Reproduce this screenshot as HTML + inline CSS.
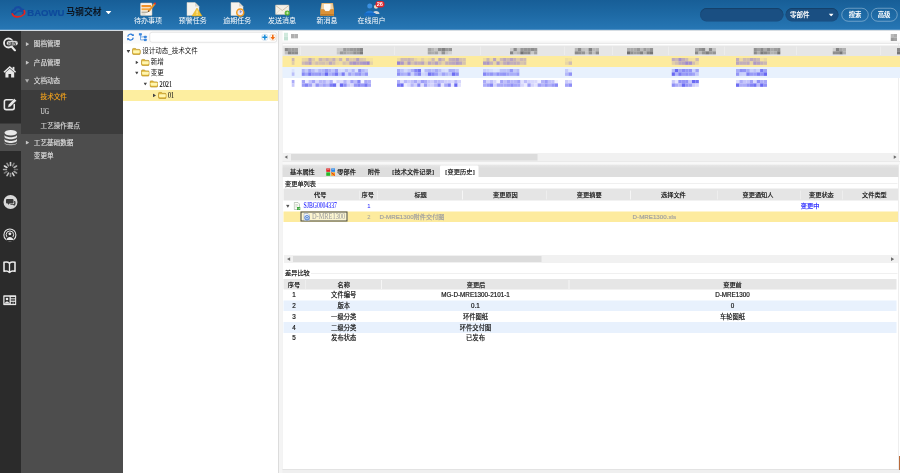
<!DOCTYPE html>
<html lang="zh-CN"><head><meta charset="utf-8"><title>马钢交材</title>
<style>
html,body{margin:0;padding:0;width:900px;height:473px;overflow:hidden;background:#fff;}
#root{position:absolute;left:0;top:0;width:1800px;height:946px;transform:scale(0.5);transform-origin:0 0;overflow:hidden;background:#fff;
 font-family:"Liberation Sans","Noto Sans CJK SC",sans-serif;font-size:12.4px;color:#111;}
.b{position:absolute;box-sizing:border-box;}
.t{position:absolute;white-space:nowrap;}
.serif{font-family:"Liberation Serif","Noto Sans CJK SC",serif;}
.w{color:#fff;}
.menu{color:#dedede;font-size:13.2px;-webkit-text-stroke:0.3px;}
.sub{color:#d4d4d4;font-size:13.2px;-webkit-text-stroke:0.3px;}
.or{color:#f5a41c;}
.blue{color:#1a1aff;}
.gray{color:#a0a0a0;}
.lab{color:#fff;font-size:14px;}
.tab{font-size:12.4px;-webkit-text-stroke:0.35px;}
.cell{font-size:12.6px;color:#111;-webkit-text-stroke:0.35px;}
.br{display:inline-block;width:6px;text-align:center;}

</style></head><body>
<div id="root">
<div class="b " style="left:0px;top:0px;width:1800px;height:60px;background:linear-gradient(#175e97 0%,#1e6aa5 50%,#2777b5 100%);"></div>
<div class="b " style="left:0px;top:58.4px;width:1800px;height:1.8px;background:#4c8fc4;"></div>
<div class="b " style="left:0px;top:60.2px;width:1800px;height:1.8px;background:#d6dde3;"></div>
<svg class="b" style="left:21px;top:10px;width:31px;height:27px;" viewBox="0 0 31 27"><path d="M7 18 C1.5 17 2 10.5 8 10 C9 3 19 2.5 21 8.5 C27 8 29 14 25 17" fill="none" stroke="#174ba2" stroke-width="4.2" stroke-linecap="round"/><path d="M9.5 17 C12 13 18 11 23 12.5" fill="none" stroke="#174ba2" stroke-width="3" stroke-linecap="round"/><path d="M3.5 17.5 C6 25.5 19 26 26.5 19 C28.5 17 28.5 13.5 27.5 11.5" fill="none" stroke="#e8241c" stroke-width="3.4" stroke-linecap="round"/></svg>
<div class="t " style="top:14.6px;line-height:20px;font-size:19.2px;left:54.6px;font-weight:bold;color:#0e4a9c;letter-spacing:-0.1px;-webkit-text-stroke:0.4px #0e4a9c;">BAOWU</div>
<div class="t " style="top:14.2px;line-height:20px;font-size:17.6px;left:132.4px;font-weight:bold;color:#0c1622;letter-spacing:0.15px;">马钢交材</div>
<svg class="b" style="left:211px;top:21.6px;width:12px;height:6.8px;" viewBox="0 0 12 7"><path d="M0 0H12L6 7Z" fill="#fff"/></svg>
<div class="t lab" style="top:31.2px;line-height:20px;left:296px;transform:translateX(-50%);">待办事项</div>
<div class="t lab" style="top:31.2px;line-height:20px;left:385.4px;transform:translateX(-50%);">预警任务</div>
<div class="t lab" style="top:31.2px;line-height:20px;left:474.6px;transform:translateX(-50%);">逾期任务</div>
<div class="t lab" style="top:31.2px;line-height:20px;left:564px;transform:translateX(-50%);">发送消息</div>
<div class="t lab" style="top:31.2px;line-height:20px;left:654px;transform:translateX(-50%);">新消息</div>
<div class="t lab" style="top:31.2px;line-height:20px;left:743px;transform:translateX(-50%);">在线用户</div>
<svg class="b" style="left:278px;top:3px;width:36px;height:30px;" viewBox="0 0 36 30"><rect x="3" y="3" width="23" height="25" rx="1.5" fill="#f7f4ee" stroke="#c9c2b4" stroke-width="1"/><rect x="5" y="7" width="19" height="4.5" fill="#f0922a"/><rect x="5" y="13.5" width="19" height="4" fill="#f4a640"/><rect x="5" y="20" width="12" height="3" fill="#b9b2a2"/><rect x="5" y="24" width="8" height="2" fill="#cfc9bb"/><path d="M30 3 L33 6 L21 20 L17 21.5 L18.5 17.5 Z" fill="#e8952c"/><circle cx="31.8" cy="4" r="2.2" fill="#e2302a"/><path d="M17 21.5 L18.5 17.5 L21 20Z" fill="#5a4a3a"/></svg>
<svg class="b" style="left:370px;top:3px;width:36px;height:31px;" viewBox="0 0 36 31"><path d="M4 2 H20 L28 10 V28 H4Z" fill="#f6f3ee" stroke="#d6d0c6" stroke-width="1"/><path d="M20 2 L28 10 H20Z" fill="#dcd6cb"/><path d="M24 13 L34 29 H14Z" fill="#f3c53a" stroke="#e0a91e" stroke-width="1"/><rect x="23.2" y="18" width="1.8" height="6" fill="#fff6d0"/><rect x="23.2" y="25" width="1.8" height="1.8" fill="#fff6d0"/></svg>
<svg class="b" style="left:459px;top:3px;width:36px;height:32px;" viewBox="0 0 36 32"><path d="M3 2 H19 L27 10 V28 H3Z" fill="#f6f3ee" stroke="#d6d0c6" stroke-width="1"/><path d="M19 2 L27 10 H19Z" fill="#dcd6cb"/><circle cx="21.5" cy="22" r="7" fill="#e9e6f2" stroke="#f09a1e" stroke-width="3"/><path d="M21.5 17.5 V22 L24.5 20" fill="none" stroke="#6a6ab0" stroke-width="1.6"/></svg>
<svg class="b" style="left:548px;top:7px;width:36px;height:26px;" viewBox="0 0 36 26"><rect x="3" y="3" width="27" height="19" rx="1.5" fill="#f5f1e8" stroke="#d0c8b8" stroke-width="1"/><path d="M3.5 4 L16.5 14 L29.5 4" fill="none" stroke="#c8b89a" stroke-width="1.6"/><path d="M3.5 21.5 L12 12 M29.5 21.5 L21 12" fill="none" stroke="#ddd2bd" stroke-width="1.2"/><circle cx="26.5" cy="19" r="5.2" fill="#58b030"/><path d="M23.5 19 H28 M26 16.5 L28.8 19 L26 21.5" fill="none" stroke="#e8ffd8" stroke-width="1.5"/></svg>
<svg class="b" style="left:639px;top:4px;width:31px;height:29px;" viewBox="0 0 31 29"><path d="M4 2 H27 L29 14 V27 H2 V14Z" fill="#dca458"/><path d="M5 3 H26 L27.5 14 H3.5Z" fill="#f0d2a4"/><rect x="9" y="4" width="13" height="14" fill="#fbfaf6"/><path d="M2 15 H10 L12 19 H19 L21 15 H29 V27 H2Z" fill="#dc9238"/><path d="M2 24 H29 V27 H2Z" fill="#c07a26"/></svg>
<svg class="b" style="left:727px;top:4px;width:35px;height:29px;" viewBox="0 0 35 29"><circle cx="25" cy="9.5" r="4.2" fill="#e8d8c4"/><path d="M18 24 C18 16 32 16 32 24Z" fill="#cdd5dc"/><circle cx="12.5" cy="8" r="5" fill="#3a8fe0"/><path d="M2 27 C2 14 23 14 23 27Z" fill="#1f7ad8"/><rect x="2" y="22" width="22" height="5" fill="#166ac4"/></svg>
<div class="b " style="left:750.6px;top:1.6px;width:18px;height:13.2px;background:#e0262c;border-radius:6.6px;"></div>
<div class="t w" style="top:-1.8px;line-height:20px;font-size:11.2px;left:759.6px;transform:translateX(-50%);font-weight:bold;">26</div>
<div class="b " style="left:1399.6px;top:15.6px;width:167px;height:27.6px;background:#1a4f82;border-radius:14px;box-shadow:inset 0 1px 2px rgba(0,0,0,.35);"></div>
<div class="b " style="left:1571.2px;top:15.6px;width:105.4px;height:27.6px;background:#1a4f82;border-radius:14px;box-shadow:inset 0 1px 2px rgba(0,0,0,.35);"></div>
<div class="t w" style="top:19.2px;line-height:20px;font-size:13px;left:1580px;font-weight:bold;">零部件</div>
<svg class="b" style="left:1656.6px;top:26.6px;width:10.8px;height:6.2px;" viewBox="0 0 12 7"><path d="M0 0H12L6 7Z" fill="#fff"/></svg>
<div class="b " style="left:1683.2px;top:16px;width:54px;height:26.8px;border:1.3px solid rgba(235,243,250,0.75);border-radius:14px;"></div>
<div class="t w" style="top:19.2px;line-height:20px;font-size:12.8px;left:1710.2px;transform:translateX(-50%);font-weight:bold;">搜索</div>
<div class="b " style="left:1741.6px;top:16px;width:53.2px;height:26.8px;border:1.3px solid rgba(235,243,250,0.75);border-radius:14px;"></div>
<div class="t w" style="top:19.2px;line-height:20px;font-size:12.8px;left:1768.2px;transform:translateX(-50%);font-weight:bold;">高级</div>
<div class="b " style="left:0px;top:62px;width:42px;height:884px;background:#2b2b2b;"></div>
<div class="b " style="left:42px;top:62px;width:203.6px;height:884px;background:#4d4d4d;"></div>
<div class="b " style="left:42px;top:180px;width:203.6px;height:88px;background:#3c3c3c;"></div>
<div class="b " style="left:0px;top:246.6px;width:42px;height:55px;background:#4d4d4d;"></div>
<svg class="b" style="left:50.6px;top:83.9px;width:7.8px;height:8.6px;" viewBox="0 0 7 9"><path d="M0 0L7 4.5L0 9Z" fill="#c4c4c4"/></svg>
<div class="t menu" style="top:78px;line-height:20px;left:67.6px;">图档管理</div>
<svg class="b" style="left:50.6px;top:121.3px;width:7.8px;height:8.6px;" viewBox="0 0 7 9"><path d="M0 0L7 4.5L0 9Z" fill="#c4c4c4"/></svg>
<div class="t menu" style="top:115.4px;line-height:20px;left:67.6px;">产品管理</div>
<svg class="b" style="left:50.4px;top:158px;width:8.4px;height:8px;" viewBox="0 0 9 7"><path d="M0 0H9L4.5 7Z" fill="#b0b0b0"/></svg>
<div class="t menu" style="top:152px;line-height:20px;left:67.6px;">文档动态</div>
<div class="t sub or" style="top:184.4px;line-height:20px;left:81.2px;">技术文件</div>
<div class="t sub serif" style="top:212.6px;line-height:20px;font-size:14.8px;left:81.2px;transform:scaleX(0.8);transform-origin:0 50%;">UG</div>
<div class="t sub" style="top:242.4px;line-height:20px;left:81.2px;">工艺操作要点</div>
<svg class="b" style="left:50.6px;top:280.9px;width:7.8px;height:8.6px;" viewBox="0 0 7 9"><path d="M0 0L7 4.5L0 9Z" fill="#c4c4c4"/></svg>
<div class="t menu" style="top:275px;line-height:20px;left:67.6px;">工艺基础数据</div>
<div class="t menu" style="top:301.8px;line-height:20px;left:67.6px;">变更单</div>
<svg class="b" style="left:4px;top:73px;width:34px;height:30px;" viewBox="0 0 34 30"><circle cx="13" cy="13" r="9" fill="none" stroke="#e8e8e8" stroke-width="3.6"/><path d="M19 20 L26 28" stroke="#e8e8e8" stroke-width="4" stroke-linecap="round"/><rect x="9" y="8.5" width="23" height="9.5" rx="4.5" fill="#e8e8e8" stroke="#2b2b2b" stroke-width="1"/><text x="20.5" y="16" font-size="7" font-weight="bold" text-anchor="middle" fill="#2b2b2b" font-family="Liberation Sans, sans-serif">NEW</text></svg>
<svg class="b" style="left:6.4px;top:130px;width:27.2px;height:26.8px;" viewBox="0 0 31 28"><path d="M15.5 1 L30 14 L27.5 16.5 L15.5 5.5 L3.5 16.5 L1 14Z" fill="#e8e8e8"/><path d="M5.5 16 L15.5 7 L25.5 16 V27 H18.5 V19 H12.5 V27 H5.5Z" fill="#e8e8e8"/><rect x="22" y="3" width="4" height="7" fill="#e8e8e8"/></svg>
<svg class="b" style="left:4.8px;top:194px;width:30px;height:29px;" viewBox="0 0 32 29"><path d="M22 5 H8 Q4 5 4 9 V22 Q4 26 8 26 H21 Q25 26 25 22 V15" fill="none" stroke="#e8e8e8" stroke-width="3.4" stroke-linecap="round"/><path d="M25 2 L30 7 L17 20 L11 21.5 L12.5 15.5Z" fill="#e8e8e8" stroke="#2b2b2b" stroke-width="1"/></svg>
<svg class="b" style="left:7px;top:259px;width:29px;height:32px;" viewBox="0 0 29 32"><ellipse cx="14.5" cy="6.5" rx="12.5" ry="5.5" fill="#e8e8e8"/><path d="M2 10.5 C2 17 27 17 27 10.5 V14.5 C27 21 2 21 2 14.5Z" fill="#e8e8e8"/><path d="M2 18 C2 24.5 27 24.5 27 18 V22 C27 28.5 2 28.5 2 22Z" fill="#e8e8e8"/><path d="M2 25.3 C2 31.8 27 31.8 27 25.3 V26.5 C27 33 2 33 2 26.5Z" fill="#e8e8e8"/></svg>
<svg class="b" style="left:5px;top:323px;width:32px;height:32px;" viewBox="0 0 32 32"><path d="M24.2 16.0 L30.0 16.0" stroke="#e0e0e0" stroke-opacity="0.35" stroke-width="3.2" stroke-linecap="round"/><path d="M23.1 20.1 L28.1 23.0" stroke="#e0e0e0" stroke-opacity="0.65" stroke-width="3.2" stroke-linecap="round"/><path d="M20.1 23.1 L23.0 28.1" stroke="#e0e0e0" stroke-opacity="0.94" stroke-width="3.2" stroke-linecap="round"/><path d="M16.0 24.2 L16.0 30.0" stroke="#e0e0e0" stroke-opacity="0.53" stroke-width="3.2" stroke-linecap="round"/><path d="M11.9 23.1 L9.0 28.1" stroke="#e0e0e0" stroke-opacity="0.82" stroke-width="3.2" stroke-linecap="round"/><path d="M8.9 20.1 L3.9 23.0" stroke="#e0e0e0" stroke-opacity="0.41" stroke-width="3.2" stroke-linecap="round"/><path d="M7.8 16.0 L2.0 16.0" stroke="#e0e0e0" stroke-opacity="0.70" stroke-width="3.2" stroke-linecap="round"/><path d="M8.9 11.9 L3.9 9.0" stroke="#e0e0e0" stroke-opacity="1.00" stroke-width="3.2" stroke-linecap="round"/><path d="M11.9 8.9 L9.0 3.9" stroke="#e0e0e0" stroke-opacity="0.59" stroke-width="3.2" stroke-linecap="round"/><path d="M16.0 7.8 L16.0 2.0" stroke="#e0e0e0" stroke-opacity="0.88" stroke-width="3.2" stroke-linecap="round"/><path d="M20.1 8.9 L23.0 3.9" stroke="#e0e0e0" stroke-opacity="0.47" stroke-width="3.2" stroke-linecap="round"/><path d="M23.1 11.9 L28.1 9.0" stroke="#e0e0e0" stroke-opacity="0.76" stroke-width="3.2" stroke-linecap="round"/></svg>
<svg class="b" style="left:6px;top:389px;width:30px;height:30px;" viewBox="0 0 30 30"><circle cx="15" cy="15" r="14" fill="#d9d9d9"/><path d="M8 9 H19 Q21 9 21 11 V16 Q21 18 19 18 H13 L10 21 V18 H8 Q6 18 6 16 V11 Q6 9 8 9Z" fill="#3a3a3a"/><path d="M22 13 H23 Q25 13 25 15 V19 Q25 21 23 21 V23.5 L20.5 21 H16 Q14.5 21 14.3 19.5 H20 Q22.5 19.5 22.5 17Z" fill="#3a3a3a"/></svg>
<svg class="b" style="left:6.4px;top:455.6px;width:27.6px;height:28.8px;" viewBox="0 0 28 29"><circle cx="14" cy="14" r="12.2" fill="none" stroke="#e8e8e8" stroke-width="2.2"/><circle cx="14" cy="13.5" r="7.6" fill="none" stroke="#e8e8e8" stroke-width="2"/><rect x="7" y="18" width="14" height="9" fill="#2b2b2b"/><circle cx="14" cy="11.8" r="3" fill="#e8e8e8"/><path d="M7.5 24 C7.5 16.5 20.5 16.5 20.5 24 Z" fill="#e8e8e8"/></svg>
<svg class="b" style="left:5.2px;top:520.8px;width:28px;height:26.4px;" viewBox="0 0 28 26"><path d="M14 5 C11 2.5 6 2.5 3 3.5 V21.5 C6 20.5 11 20.5 14 23.5 C17 20.5 22 20.5 25 21.5 V3.5 C22 2.5 17 2.5 14 5Z" fill="none" stroke="#e8e8e8" stroke-width="3.2" stroke-linejoin="round"/><path d="M14 5 V23.5" stroke="#e8e8e8" stroke-width="2.6"/></svg>
<svg class="b" style="left:5.6px;top:590px;width:27.2px;height:21.2px;" viewBox="0 0 27 21"><rect x="0.5" y="0.5" width="26" height="20" rx="1.5" fill="#e8e8e8"/><rect x="3" y="3.5" width="10" height="13" fill="#2b2b2b"/><circle cx="8" cy="8" r="2.6" fill="#e8e8e8"/><path d="M4 16.5 C4 11.5 12 11.5 12 16.5Z" fill="#e8e8e8"/><rect x="15.5" y="4" width="8.5" height="2.6" fill="#2b2b2b"/><rect x="15.5" y="8.6" width="8.5" height="2.6" fill="#2b2b2b"/><rect x="15.5" y="13.5" width="4" height="4" fill="#2b2b2b"/><rect x="20.5" y="13.5" width="3.5" height="4" fill="#2b2b2b"/></svg>
<div class="b " style="left:245.6px;top:62px;width:310.4px;height:884px;background:#fff;"></div>
<div class="b " style="left:556px;top:62px;width:9.2px;height:884px;background:#f4f4f4;border-left:1px solid #c4c4c4;border-right:1px solid #d4d4d4;"></div>
<div class="b " style="left:245.6px;top:62px;width:310.4px;height:25.2px;background:#fafafa;"></div>
<div class="b " style="left:299.2px;top:64px;width:254.4px;height:21.2px;background:#fff;border:1px solid #cfcfcf;border-radius:5px;"></div>
<svg class="b" style="left:253px;top:66.4px;width:16px;height:16.4px;" viewBox="0 0 16 16"><path d="M2.5 7 A5.5 5.5 0 0 1 12.5 4.5" fill="none" stroke="#2a7ad8" stroke-width="2.4"/><path d="M10 5.8 L14.8 6 L14.2 1.2Z" fill="#2a7ad8"/><path d="M13.5 9 A5.5 5.5 0 0 1 3.5 11.5" fill="none" stroke="#2a7ad8" stroke-width="2.4"/><path d="M6 10.2 L1.2 10 L1.8 14.8Z" fill="#2a7ad8"/></svg>
<svg class="b" style="left:277px;top:66.4px;width:18px;height:16.8px;" viewBox="0 0 18 17"><path d="M1 2.5 H7 M4 2.5 V14 H11 M4 8 H11" fill="none" stroke="#5a9ae0" stroke-width="1.6"/><rect x="0.5" y="0.5" width="6" height="4.5" fill="#3a86dc"/><rect x="11" y="5.5" width="5.5" height="5" rx="1" fill="#3a86dc"/><rect x="11" y="11.5" width="5.5" height="5" rx="1" fill="#3a86dc"/></svg>
<svg class="b" style="left:522px;top:66.6px;width:15.2px;height:15.2px;" viewBox="0 0 15 15"><circle cx="7.5" cy="7.5" r="6.6" fill="#f2f8fd" stroke="#c4d8e8" stroke-width="1.2"/><path d="M7.5 2.6 V12.4 M2.6 7.5 H12.4" stroke="#168ad8" stroke-width="2.8"/></svg>
<svg class="b" style="left:538px;top:66.6px;width:15.2px;height:15.2px;" viewBox="0 0 15 15"><circle cx="7.5" cy="7.5" r="6.6" fill="#fdf5ee" stroke="#ecd4c0" stroke-width="1.2"/><path d="M7.5 2.4 V9" stroke="#f06a10" stroke-width="3"/><path d="M3 7 L7.5 13 L12 7Z" fill="#f06a10"/></svg>
<div class="b " style="left:245.6px;top:180.4px;width:310.4px;height:22px;background:#fdeea0;"></div>
<svg class="b" style="left:253.2px;top:99.8px;width:7.2px;height:6px;" viewBox="0 0 9 7"><path d="M0 0H9L4.5 7Z" fill="#444"/></svg>
<svg class="b" style="left:264.4px;top:94.6px;width:17.6px;height:15.4px;" viewBox="0 0 18 15"><path d="M1 3.5 Q1 1.5 3 1.5 H6.5 Q7.8 1.5 8.4 2.6 L9 3.5 H14.5 Q17 3.5 17 6 V11.5 Q17 14 14.5 14 H3.5 Q1 14 1 11.5Z" fill="#e0b83c" stroke="#b48c1c" stroke-width="1.3"/><path d="M2.2 6.2 Q2.2 5.4 3 5.4 H15 Q15.8 5.4 15.8 6.2 V9.5 Q15.8 11.4 13.8 11.4 H4.2 Q2.2 11.4 2.2 9.5Z" fill="#fff6b0"/></svg>
<div class="t " style="top:92.4px;line-height:20px;font-size:13px;left:284.4px;color:#111;">设计动态_技术文件</div>
<svg class="b" style="left:271.3px;top:120.6px;width:6px;height:7.6px;" viewBox="0 0 7 9"><path d="M0 0L7 4.5L0 9Z" fill="#444"/></svg>
<svg class="b" style="left:281.5px;top:116.6px;width:17.6px;height:15.4px;" viewBox="0 0 18 15"><path d="M1 3.5 Q1 1.5 3 1.5 H6.5 Q7.8 1.5 8.4 2.6 L9 3.5 H14.5 Q17 3.5 17 6 V11.5 Q17 14 14.5 14 H3.5 Q1 14 1 11.5Z" fill="#e0b83c" stroke="#b48c1c" stroke-width="1.3"/><path d="M2.2 6.2 Q2.2 5.4 3 5.4 H15 Q15.8 5.4 15.8 6.2 V9.5 Q15.8 11.4 13.8 11.4 H4.2 Q2.2 11.4 2.2 9.5Z" fill="#fff6b0"/></svg>
<div class="t " style="top:114.4px;line-height:20px;font-size:13px;left:301.5px;color:#111;">新增</div>
<svg class="b" style="left:270.3px;top:143.4px;width:7.2px;height:6px;" viewBox="0 0 9 7"><path d="M0 0H9L4.5 7Z" fill="#444"/></svg>
<svg class="b" style="left:281.5px;top:138.2px;width:17.6px;height:15.4px;" viewBox="0 0 18 15"><path d="M1 3.5 Q1 1.5 3 1.5 H6.5 Q7.8 1.5 8.4 2.6 L9 3.5 H14.5 Q17 3.5 17 6 V11.5 Q17 14 14.5 14 H3.5 Q1 14 1 11.5Z" fill="#e0b83c" stroke="#b48c1c" stroke-width="1.3"/><path d="M2.2 6.2 Q2.2 5.4 3 5.4 H15 Q15.8 5.4 15.8 6.2 V9.5 Q15.8 11.4 13.8 11.4 H4.2 Q2.2 11.4 2.2 9.5Z" fill="#fff6b0"/></svg>
<div class="t " style="top:136px;line-height:20px;font-size:13px;left:301.5px;color:#111;">变更</div>
<svg class="b" style="left:287.4px;top:165.4px;width:7.2px;height:6px;" viewBox="0 0 9 7"><path d="M0 0H9L4.5 7Z" fill="#444"/></svg>
<svg class="b" style="left:298.6px;top:160.2px;width:17.6px;height:15.4px;" viewBox="0 0 18 15"><path d="M1 3.5 Q1 1.5 3 1.5 H6.5 Q7.8 1.5 8.4 2.6 L9 3.5 H14.5 Q17 3.5 17 6 V11.5 Q17 14 14.5 14 H3.5 Q1 14 1 11.5Z" fill="#e0b83c" stroke="#b48c1c" stroke-width="1.3"/><path d="M2.2 6.2 Q2.2 5.4 3 5.4 H15 Q15.8 5.4 15.8 6.2 V9.5 Q15.8 11.4 13.8 11.4 H4.2 Q2.2 11.4 2.2 9.5Z" fill="#fff6b0"/></svg>
<div class="t serif" style="top:157.6px;line-height:20px;font-size:15px;left:318.6px;transform:scaleX(0.84);transform-origin:0 50%;color:#111;-webkit-text-stroke:0.25px;">2021</div>
<svg class="b" style="left:305.5px;top:187px;width:6px;height:7.6px;" viewBox="0 0 7 9"><path d="M0 0L7 4.5L0 9Z" fill="#444"/></svg>
<svg class="b" style="left:315.7px;top:183px;width:17.6px;height:15.4px;" viewBox="0 0 18 15"><path d="M1 3.5 Q1 1.5 3 1.5 H6.5 Q7.8 1.5 8.4 2.6 L9 3.5 H14.5 Q17 3.5 17 6 V11.5 Q17 14 14.5 14 H3.5 Q1 14 1 11.5Z" fill="#e0b83c" stroke="#b48c1c" stroke-width="1.3"/><path d="M2.2 6.2 Q2.2 5.4 3 5.4 H15 Q15.8 5.4 15.8 6.2 V9.5 Q15.8 11.4 13.8 11.4 H4.2 Q2.2 11.4 2.2 9.5Z" fill="#fff6b0"/></svg>
<div class="t serif" style="top:180.4px;line-height:20px;font-size:15px;left:335.7px;transform:scaleX(0.8);transform-origin:0 50%;color:#111;-webkit-text-stroke:0.25px;">01</div>
<div class="b " style="left:565.2px;top:62px;width:1234.8px;height:884px;background:#fff;"></div>
<div class="b " style="left:1796.8px;top:62px;width:1.2px;height:877.2px;background:#dcdcdc;"></div>
<div class="b " style="left:565.2px;top:938.8px;width:1234.8px;height:7.2px;background:#efefef;border-top:1px solid #cfcfcf;"></div>
<div class="b " style="left:1798px;top:912px;width:2px;height:28px;background:#b86a3a;"></div>
<div class="b " style="left:565.2px;top:62px;width:1234.8px;height:26px;background:linear-gradient(#fff 0%,#fff 70%,#f0f0f0 100%);border-bottom:1px solid #dddddd;"></div>
<svg class="b" style="left:568px;top:64.8px;width:8.4px;height:16.4px;filter:blur(0.7px);" viewBox="0 0 4.20 8.20"><rect x="0.00" y="0.00" width="4.25" height="4.15" fill="#d0e9dd"/><rect x="0.00" y="4.10" width="4.25" height="4.15" fill="#c3e2d4"/></svg>
<svg class="b" style="left:582px;top:67.6px;width:14px;height:9.2px;filter:blur(0.7px);" viewBox="0 0 7.00 4.60"><rect x="0.00" y="0.00" width="3.55" height="4.65" fill="#afafaf"/><rect x="3.50" y="0.00" width="3.55" height="4.65" fill="#b1b1b1"/></svg>
<svg class="b" style="left:1780.8px;top:67.6px;width:13.6px;height:14px;filter:blur(0.55px);" viewBox="0 0 6.80 7.00"><rect x="0.00" y="0.00" width="3.45" height="3.55" fill="#b9b9b9"/><rect x="3.40" y="0.00" width="3.45" height="3.55" fill="#aeaeae"/><rect x="0.00" y="3.50" width="3.45" height="3.55" fill="#989898"/><rect x="3.40" y="3.50" width="3.45" height="3.55" fill="#a3a3a3"/></svg>
<div class="b " style="left:565.2px;top:90.8px;width:1234.8px;height:21.2px;background:#e6e6e6;"></div>
<div class="b " style="left:565.2px;top:112px;width:1234.8px;height:22.4px;background:#fdeb9e;"></div>
<div class="b " style="left:565.2px;top:134.4px;width:1234.8px;height:22px;background:#e8f1fd;"></div>
<div class="b " style="left:600px;top:93px;width:1px;height:17px;background:#f4f4f4;"></div>
<div class="b " style="left:788px;top:93px;width:1px;height:17px;background:#f4f4f4;"></div>
<div class="b " style="left:960px;top:93px;width:1px;height:17px;background:#f4f4f4;"></div>
<div class="b " style="left:1128px;top:93px;width:1px;height:17px;background:#f4f4f4;"></div>
<div class="b " style="left:1224px;top:93px;width:1px;height:17px;background:#f4f4f4;"></div>
<div class="b " style="left:1336px;top:93px;width:1px;height:17px;background:#f4f4f4;"></div>
<div class="b " style="left:1448px;top:93px;width:1px;height:17px;background:#f4f4f4;"></div>
<div class="b " style="left:1592px;top:93px;width:1px;height:17px;background:#f4f4f4;"></div>
<div class="b " style="left:1760px;top:93px;width:1px;height:17px;background:#f4f4f4;"></div>
<svg class="b" style="left:568.6px;top:96px;width:27.4px;height:13.4px;filter:blur(0.55px);" viewBox="0 0 13.70 6.70"><rect x="0.00" y="0.00" width="3.47" height="3.40" fill="#8a8a8a"/><rect x="3.42" y="0.00" width="3.47" height="3.40" fill="#9c9c9c"/><rect x="6.85" y="0.00" width="3.47" height="3.40" fill="#999999"/><rect x="10.27" y="0.00" width="3.47" height="3.40" fill="#9e9e9e"/><rect x="0.00" y="3.35" width="3.47" height="3.40" fill="#bebebe"/><rect x="3.42" y="3.35" width="3.47" height="3.40" fill="#848484"/><rect x="6.85" y="3.35" width="3.47" height="3.40" fill="#8c8c8c"/><rect x="10.27" y="3.35" width="3.47" height="3.40" fill="#8c8c8c"/></svg>
<svg class="b" style="left:672.6px;top:96px;width:53.4px;height:13.4px;filter:blur(0.55px);" viewBox="0 0 26.70 6.70"><rect x="0.00" y="0.00" width="3.39" height="3.40" fill="#c9c9c9"/><rect x="3.34" y="0.00" width="3.39" height="3.40" fill="#cacaca"/><rect x="6.67" y="0.00" width="3.39" height="3.40" fill="#9b9b9b"/><rect x="10.01" y="0.00" width="3.39" height="3.40" fill="#a3a3a3"/><rect x="13.35" y="0.00" width="3.39" height="3.40" fill="#9b9b9b"/><rect x="16.69" y="0.00" width="3.39" height="3.40" fill="#999999"/><rect x="20.02" y="0.00" width="3.39" height="3.40" fill="#959595"/><rect x="23.36" y="0.00" width="3.39" height="3.40" fill="#878787"/><rect x="0.00" y="3.35" width="3.39" height="3.40" fill="#c6c6c6"/><rect x="3.34" y="3.35" width="3.39" height="3.40" fill="#9a9a9a"/><rect x="6.67" y="3.35" width="3.39" height="3.40" fill="#a2a2a2"/><rect x="10.01" y="3.35" width="3.39" height="3.40" fill="#adadad"/><rect x="13.35" y="3.35" width="3.39" height="3.40" fill="#aaaaaa"/><rect x="16.69" y="3.35" width="3.39" height="3.40" fill="#929292"/><rect x="20.02" y="3.35" width="3.39" height="3.40" fill="#969696"/><rect x="23.36" y="3.35" width="3.39" height="3.40" fill="#7a7a7a"/></svg>
<svg class="b" style="left:854.6px;top:96px;width:49px;height:13.4px;filter:blur(0.55px);" viewBox="0 0 24.50 6.70"><rect x="0.00" y="0.00" width="3.55" height="3.40" fill="#a4a4a4"/><rect x="3.50" y="0.00" width="3.55" height="3.40" fill="#b5b5b5"/><rect x="7.00" y="0.00" width="3.55" height="3.40" fill="#c4c4c4"/><rect x="10.50" y="0.00" width="3.55" height="3.40" fill="#8f8f8f"/><rect x="14.00" y="0.00" width="3.55" height="3.40" fill="#818181"/><rect x="17.50" y="0.00" width="3.55" height="3.40" fill="#9a9a9a"/><rect x="21.00" y="0.00" width="3.55" height="3.40" fill="#949494"/><rect x="0.00" y="3.35" width="3.55" height="3.40" fill="#a6a6a6"/><rect x="3.50" y="3.35" width="3.55" height="3.40" fill="#aeaeae"/><rect x="7.00" y="3.35" width="3.55" height="3.40" fill="#a4a4a4"/><rect x="10.50" y="3.35" width="3.55" height="3.40" fill="#cdcdcd"/><rect x="14.00" y="3.35" width="3.55" height="3.40" fill="#929292"/><rect x="17.50" y="3.35" width="3.55" height="3.40" fill="#c3c3c3"/><rect x="21.00" y="3.35" width="3.55" height="3.40" fill="#d1d1d1"/></svg>
<svg class="b" style="left:1020px;top:96px;width:55px;height:13.4px;filter:blur(0.55px);" viewBox="0 0 27.50 6.70"><rect x="0.00" y="0.00" width="3.49" height="3.40" fill="#cecece"/><rect x="3.44" y="0.00" width="3.49" height="3.40" fill="#8c8c8c"/><rect x="6.88" y="0.00" width="3.49" height="3.40" fill="#c5c5c5"/><rect x="10.31" y="0.00" width="3.49" height="3.40" fill="#989898"/><rect x="13.75" y="0.00" width="3.49" height="3.40" fill="#969696"/><rect x="17.19" y="0.00" width="3.49" height="3.40" fill="#959595"/><rect x="20.62" y="0.00" width="3.49" height="3.40" fill="#8c8c8c"/><rect x="24.06" y="0.00" width="3.49" height="3.40" fill="#969696"/><rect x="0.00" y="3.35" width="3.49" height="3.40" fill="#848484"/><rect x="3.44" y="3.35" width="3.49" height="3.40" fill="#c1c1c1"/><rect x="6.88" y="3.35" width="3.49" height="3.40" fill="#b6b6b6"/><rect x="10.31" y="3.35" width="3.49" height="3.40" fill="#737373"/><rect x="13.75" y="3.35" width="3.49" height="3.40" fill="#909090"/><rect x="17.19" y="3.35" width="3.49" height="3.40" fill="#898989"/><rect x="20.62" y="3.35" width="3.49" height="3.40" fill="#c8c8c8"/><rect x="24.06" y="3.35" width="3.49" height="3.40" fill="#a1a1a1"/></svg>
<svg class="b" style="left:1148.8px;top:96px;width:49.2px;height:13.4px;filter:blur(0.55px);" viewBox="0 0 24.60 6.70"><rect x="0.00" y="0.00" width="3.56" height="3.40" fill="#b6b6b6"/><rect x="3.51" y="0.00" width="3.56" height="3.40" fill="#8c8c8c"/><rect x="7.03" y="0.00" width="3.56" height="3.40" fill="#c2c2c2"/><rect x="10.54" y="0.00" width="3.56" height="3.40" fill="#c7c7c7"/><rect x="14.06" y="0.00" width="3.56" height="3.40" fill="#828282"/><rect x="17.57" y="0.00" width="3.56" height="3.40" fill="#b9b9b9"/><rect x="21.09" y="0.00" width="3.56" height="3.40" fill="#b4b4b4"/><rect x="0.00" y="3.35" width="3.56" height="3.40" fill="#898989"/><rect x="3.51" y="3.35" width="3.56" height="3.40" fill="#909090"/><rect x="7.03" y="3.35" width="3.56" height="3.40" fill="#949494"/><rect x="10.54" y="3.35" width="3.56" height="3.40" fill="#c4c4c4"/><rect x="14.06" y="3.35" width="3.56" height="3.40" fill="#919191"/><rect x="17.57" y="3.35" width="3.56" height="3.40" fill="#bebebe"/><rect x="21.09" y="3.35" width="3.56" height="3.40" fill="#8b8b8b"/></svg>
<svg class="b" style="left:1254.4px;top:96px;width:52.2px;height:13.4px;filter:blur(0.55px);" viewBox="0 0 26.10 6.70"><rect x="0.00" y="0.00" width="3.31" height="3.40" fill="#acacac"/><rect x="3.26" y="0.00" width="3.31" height="3.40" fill="#ababab"/><rect x="6.52" y="0.00" width="3.31" height="3.40" fill="#aaaaaa"/><rect x="9.79" y="0.00" width="3.31" height="3.40" fill="#999999"/><rect x="13.05" y="0.00" width="3.31" height="3.40" fill="#bcbcbc"/><rect x="16.31" y="0.00" width="3.31" height="3.40" fill="#9c9c9c"/><rect x="19.57" y="0.00" width="3.31" height="3.40" fill="#acacac"/><rect x="22.84" y="0.00" width="3.31" height="3.40" fill="#939393"/><rect x="0.00" y="3.35" width="3.31" height="3.40" fill="#6e6e6e"/><rect x="3.26" y="3.35" width="3.31" height="3.40" fill="#8f8f8f"/><rect x="6.52" y="3.35" width="3.31" height="3.40" fill="#9d9d9d"/><rect x="9.79" y="3.35" width="3.31" height="3.40" fill="#999999"/><rect x="13.05" y="3.35" width="3.31" height="3.40" fill="#818181"/><rect x="16.31" y="3.35" width="3.31" height="3.40" fill="#b2b2b2"/><rect x="19.57" y="3.35" width="3.31" height="3.40" fill="#848484"/><rect x="22.84" y="3.35" width="3.31" height="3.40" fill="#757575"/></svg>
<svg class="b" style="left:1389.8px;top:96px;width:41.8px;height:13.4px;filter:blur(0.55px);" viewBox="0 0 20.90 6.70"><rect x="0.00" y="0.00" width="3.53" height="3.40" fill="#aaaaaa"/><rect x="3.48" y="0.00" width="3.53" height="3.40" fill="#949494"/><rect x="6.97" y="0.00" width="3.53" height="3.40" fill="#898989"/><rect x="10.45" y="0.00" width="3.53" height="3.40" fill="#d6d6d6"/><rect x="13.93" y="0.00" width="3.53" height="3.40" fill="#898989"/><rect x="17.42" y="0.00" width="3.53" height="3.40" fill="#c3c3c3"/><rect x="0.00" y="3.35" width="3.53" height="3.40" fill="#888888"/><rect x="3.48" y="3.35" width="3.53" height="3.40" fill="#bababa"/><rect x="6.97" y="3.35" width="3.53" height="3.40" fill="#949494"/><rect x="10.45" y="3.35" width="3.53" height="3.40" fill="#7c7c7c"/><rect x="13.93" y="3.35" width="3.53" height="3.40" fill="#9b9b9b"/><rect x="17.42" y="3.35" width="3.53" height="3.40" fill="#939393"/></svg>
<svg class="b" style="left:1506.8px;top:96px;width:54.2px;height:13.4px;filter:blur(0.55px);" viewBox="0 0 27.10 6.70"><rect x="0.00" y="0.00" width="3.44" height="3.40" fill="#909090"/><rect x="3.39" y="0.00" width="3.44" height="3.40" fill="#9f9f9f"/><rect x="6.78" y="0.00" width="3.44" height="3.40" fill="#8a8a8a"/><rect x="10.16" y="0.00" width="3.44" height="3.40" fill="#a9a9a9"/><rect x="13.55" y="0.00" width="3.44" height="3.40" fill="#8d8d8d"/><rect x="16.94" y="0.00" width="3.44" height="3.40" fill="#a8a8a8"/><rect x="20.33" y="0.00" width="3.44" height="3.40" fill="#9d9d9d"/><rect x="23.71" y="0.00" width="3.44" height="3.40" fill="#939393"/><rect x="0.00" y="3.35" width="3.44" height="3.40" fill="#8a8a8a"/><rect x="3.39" y="3.35" width="3.44" height="3.40" fill="#aeaeae"/><rect x="6.78" y="3.35" width="3.44" height="3.40" fill="#7b7b7b"/><rect x="10.16" y="3.35" width="3.44" height="3.40" fill="#878787"/><rect x="13.55" y="3.35" width="3.44" height="3.40" fill="#989898"/><rect x="16.94" y="3.35" width="3.44" height="3.40" fill="#b2b2b2"/><rect x="20.33" y="3.35" width="3.44" height="3.40" fill="#acacac"/><rect x="23.71" y="3.35" width="3.44" height="3.40" fill="#747474"/></svg>
<svg class="b" style="left:1664.6px;top:96px;width:27.2px;height:13.4px;filter:blur(0.55px);" viewBox="0 0 13.60 6.70"><rect x="0.00" y="0.00" width="3.45" height="3.40" fill="#cfcfcf"/><rect x="3.40" y="0.00" width="3.45" height="3.40" fill="#828282"/><rect x="6.80" y="0.00" width="3.45" height="3.40" fill="#a4a4a4"/><rect x="10.20" y="0.00" width="3.45" height="3.40" fill="#b0b0b0"/><rect x="0.00" y="3.35" width="3.45" height="3.40" fill="#8e8e8e"/><rect x="3.40" y="3.35" width="3.45" height="3.40" fill="#8e8e8e"/><rect x="6.80" y="3.35" width="3.45" height="3.40" fill="#757575"/><rect x="10.20" y="3.35" width="3.45" height="3.40" fill="#afafaf"/></svg>
<svg class="b" style="left:1794px;top:96px;width:6px;height:13.4px;filter:blur(0.55px);" viewBox="0 0 3.00 6.70"><rect x="0.00" y="0.00" width="3.05" height="3.40" fill="#888888"/><rect x="0.00" y="3.35" width="3.05" height="3.40" fill="#767676"/></svg>
<svg class="b" style="left:582.6px;top:116px;width:6.8px;height:13.6px;filter:blur(0.55px);" viewBox="0 0 3.40 6.80"><rect x="0.00" y="0.00" width="3.45" height="3.45" fill="#c9b6b7"/><rect x="0.00" y="3.40" width="3.45" height="3.45" fill="#dfccaa"/></svg>
<svg class="b" style="left:602.6px;top:116px;width:143.4px;height:13.6px;filter:blur(0.55px);" viewBox="0 0 71.70 6.80"><rect x="0.00" y="0.00" width="3.46" height="3.45" fill="#e8d6a5"/><rect x="3.41" y="0.00" width="3.46" height="3.45" fill="#e6d3a6"/><rect x="6.83" y="0.00" width="3.46" height="3.45" fill="#bba8be"/><rect x="10.24" y="0.00" width="3.46" height="3.45" fill="#deccaa"/><rect x="13.66" y="0.00" width="3.46" height="3.45" fill="#f4e29e"/><rect x="17.07" y="0.00" width="3.46" height="3.45" fill="#c8b5b7"/><rect x="20.49" y="0.00" width="3.46" height="3.45" fill="#d9c7ad"/><rect x="23.90" y="0.00" width="3.46" height="3.45" fill="#c8b5b7"/><rect x="27.31" y="0.00" width="3.46" height="3.45" fill="#dac8ad"/><rect x="30.73" y="0.00" width="3.46" height="3.45" fill="#c3b0ba"/><rect x="34.14" y="0.00" width="3.46" height="3.45" fill="#e7d5a6"/><rect x="37.56" y="0.00" width="3.46" height="3.45" fill="#c7b4b8"/><rect x="40.97" y="0.00" width="3.46" height="3.45" fill="#f4e29e"/><rect x="44.39" y="0.00" width="3.46" height="3.45" fill="#c3b0ba"/><rect x="47.80" y="0.00" width="3.46" height="3.45" fill="#ddcaab"/><rect x="51.21" y="0.00" width="3.46" height="3.45" fill="#dac7ad"/><rect x="54.63" y="0.00" width="3.46" height="3.45" fill="#b4a1c3"/><rect x="58.04" y="0.00" width="3.46" height="3.45" fill="#d8c5ae"/><rect x="61.46" y="0.00" width="3.46" height="3.45" fill="#ddcbab"/><rect x="64.87" y="0.00" width="3.46" height="3.45" fill="#f3e19f"/><rect x="68.29" y="0.00" width="3.46" height="3.45" fill="#f4e29e"/><rect x="0.00" y="3.40" width="3.46" height="3.45" fill="#cfbcb3"/><rect x="3.41" y="3.40" width="3.46" height="3.45" fill="#c2afbb"/><rect x="6.83" y="3.40" width="3.46" height="3.45" fill="#b29ec4"/><rect x="10.24" y="3.40" width="3.46" height="3.45" fill="#e3d0a8"/><rect x="13.66" y="3.40" width="3.46" height="3.45" fill="#d0bdb3"/><rect x="17.07" y="3.40" width="3.46" height="3.45" fill="#d5c2b0"/><rect x="20.49" y="3.40" width="3.46" height="3.45" fill="#d2c0b1"/><rect x="23.90" y="3.40" width="3.46" height="3.45" fill="#dbc8ac"/><rect x="27.31" y="3.40" width="3.46" height="3.45" fill="#bba8bf"/><rect x="30.73" y="3.40" width="3.46" height="3.45" fill="#d0bdb3"/><rect x="34.14" y="3.40" width="3.46" height="3.45" fill="#ebd8a3"/><rect x="37.56" y="3.40" width="3.46" height="3.45" fill="#f0dea0"/><rect x="40.97" y="3.40" width="3.46" height="3.45" fill="#d4c2b0"/><rect x="44.39" y="3.40" width="3.46" height="3.45" fill="#e0cea9"/><rect x="47.80" y="3.40" width="3.46" height="3.45" fill="#b3a0c3"/><rect x="51.21" y="3.40" width="3.46" height="3.45" fill="#a793ca"/><rect x="54.63" y="3.40" width="3.46" height="3.45" fill="#b5a1c2"/><rect x="58.04" y="3.40" width="3.46" height="3.45" fill="#b09cc5"/><rect x="61.46" y="3.40" width="3.46" height="3.45" fill="#a794ca"/><rect x="64.87" y="3.40" width="3.46" height="3.45" fill="#9a86d2"/><rect x="68.29" y="3.40" width="3.46" height="3.45" fill="#e7d4a6"/></svg>
<svg class="b" style="left:794px;top:116px;width:137.6px;height:13.6px;filter:blur(0.55px);" viewBox="0 0 68.80 6.80"><rect x="0.00" y="0.00" width="3.49" height="3.45" fill="#ecdaa3"/><rect x="3.44" y="0.00" width="3.49" height="3.45" fill="#cbb8b6"/><rect x="6.88" y="0.00" width="3.49" height="3.45" fill="#cdbab4"/><rect x="10.32" y="0.00" width="3.49" height="3.45" fill="#c6b3b8"/><rect x="13.76" y="0.00" width="3.49" height="3.45" fill="#d3c0b1"/><rect x="17.20" y="0.00" width="3.49" height="3.45" fill="#e7d4a6"/><rect x="20.64" y="0.00" width="3.49" height="3.45" fill="#f2e09f"/><rect x="24.08" y="0.00" width="3.49" height="3.45" fill="#e0cea9"/><rect x="27.52" y="0.00" width="3.49" height="3.45" fill="#f1dfa0"/><rect x="30.96" y="0.00" width="3.49" height="3.45" fill="#ead8a4"/><rect x="34.40" y="0.00" width="3.49" height="3.45" fill="#ccb9b5"/><rect x="37.84" y="0.00" width="3.49" height="3.45" fill="#f4e29e"/><rect x="41.28" y="0.00" width="3.49" height="3.45" fill="#b6a3c2"/><rect x="44.72" y="0.00" width="3.49" height="3.45" fill="#d0bdb3"/><rect x="48.16" y="0.00" width="3.49" height="3.45" fill="#f4e29e"/><rect x="51.60" y="0.00" width="3.49" height="3.45" fill="#c4b1ba"/><rect x="55.04" y="0.00" width="3.49" height="3.45" fill="#beaabd"/><rect x="58.48" y="0.00" width="3.49" height="3.45" fill="#b4a0c3"/><rect x="61.92" y="0.00" width="3.49" height="3.45" fill="#d3c0b1"/><rect x="65.36" y="0.00" width="3.49" height="3.45" fill="#d5c2b0"/><rect x="0.00" y="3.40" width="3.49" height="3.45" fill="#9783d4"/><rect x="3.44" y="3.40" width="3.49" height="3.45" fill="#ad99c7"/><rect x="6.88" y="3.40" width="3.49" height="3.45" fill="#dbc8ad"/><rect x="10.32" y="3.40" width="3.49" height="3.45" fill="#ae9ac6"/><rect x="13.76" y="3.40" width="3.49" height="3.45" fill="#d4c2b0"/><rect x="17.20" y="3.40" width="3.49" height="3.45" fill="#bdaabe"/><rect x="20.64" y="3.40" width="3.49" height="3.45" fill="#c4b1ba"/><rect x="24.08" y="3.40" width="3.49" height="3.45" fill="#b8a4c1"/><rect x="27.52" y="3.40" width="3.49" height="3.45" fill="#e2d0a8"/><rect x="30.96" y="3.40" width="3.49" height="3.45" fill="#bba7bf"/><rect x="34.40" y="3.40" width="3.49" height="3.45" fill="#c9b6b7"/><rect x="37.84" y="3.40" width="3.49" height="3.45" fill="#b29fc4"/><rect x="41.28" y="3.40" width="3.49" height="3.45" fill="#cfbdb3"/><rect x="44.72" y="3.40" width="3.49" height="3.45" fill="#e5d3a7"/><rect x="48.16" y="3.40" width="3.49" height="3.45" fill="#c2afbb"/><rect x="51.60" y="3.40" width="3.49" height="3.45" fill="#bfacbd"/><rect x="55.04" y="3.40" width="3.49" height="3.45" fill="#baa6c0"/><rect x="58.48" y="3.40" width="3.49" height="3.45" fill="#ad99c7"/><rect x="61.92" y="3.40" width="3.49" height="3.45" fill="#b9a6c0"/><rect x="65.36" y="3.40" width="3.49" height="3.45" fill="#d6c4af"/></svg>
<svg class="b" style="left:965.8px;top:116px;width:87.2px;height:13.6px;filter:blur(0.55px);" viewBox="0 0 43.60 6.80"><rect x="0.00" y="0.00" width="3.40" height="3.45" fill="#ecdaa2"/><rect x="3.35" y="0.00" width="3.40" height="3.45" fill="#cab7b6"/><rect x="6.71" y="0.00" width="3.40" height="3.45" fill="#eedca1"/><rect x="10.06" y="0.00" width="3.40" height="3.45" fill="#b8a5c0"/><rect x="13.42" y="0.00" width="3.40" height="3.45" fill="#f1dfa0"/><rect x="16.77" y="0.00" width="3.40" height="3.45" fill="#cebbb4"/><rect x="20.12" y="0.00" width="3.40" height="3.45" fill="#baa7bf"/><rect x="23.48" y="0.00" width="3.40" height="3.45" fill="#cab7b6"/><rect x="26.83" y="0.00" width="3.40" height="3.45" fill="#b7a3c1"/><rect x="30.18" y="0.00" width="3.40" height="3.45" fill="#c5b2b9"/><rect x="33.54" y="0.00" width="3.40" height="3.45" fill="#dcc9ac"/><rect x="36.89" y="0.00" width="3.40" height="3.45" fill="#cab7b6"/><rect x="40.25" y="0.00" width="3.40" height="3.45" fill="#cdbab5"/><rect x="0.00" y="3.40" width="3.40" height="3.45" fill="#b09cc5"/><rect x="3.35" y="3.40" width="3.40" height="3.45" fill="#a995c9"/><rect x="6.71" y="3.40" width="3.40" height="3.45" fill="#c7b4b8"/><rect x="10.06" y="3.40" width="3.40" height="3.45" fill="#e7d5a5"/><rect x="13.42" y="3.40" width="3.40" height="3.45" fill="#b09dc5"/><rect x="16.77" y="3.40" width="3.40" height="3.45" fill="#dbc8ad"/><rect x="20.12" y="3.40" width="3.40" height="3.45" fill="#beabbd"/><rect x="23.48" y="3.40" width="3.40" height="3.45" fill="#b29fc4"/><rect x="26.83" y="3.40" width="3.40" height="3.45" fill="#c2afbb"/><rect x="30.18" y="3.40" width="3.40" height="3.45" fill="#beabbd"/><rect x="33.54" y="3.40" width="3.40" height="3.45" fill="#c1aebb"/><rect x="36.89" y="3.40" width="3.40" height="3.45" fill="#d8c6ae"/><rect x="40.25" y="3.40" width="3.40" height="3.45" fill="#cfbdb3"/></svg>
<svg class="b" style="left:1130px;top:116px;width:14px;height:13.6px;filter:blur(0.55px);" viewBox="0 0 7.00 6.80"><rect x="0.00" y="0.00" width="3.55" height="3.45" fill="#f0dea0"/><rect x="3.50" y="0.00" width="3.55" height="3.45" fill="#f4e29e"/><rect x="0.00" y="3.40" width="3.55" height="3.45" fill="#e9d7a4"/><rect x="3.50" y="3.40" width="3.55" height="3.45" fill="#cfbdb3"/></svg>
<svg class="b" style="left:1343px;top:116px;width:54.6px;height:13.6px;filter:blur(0.55px);" viewBox="0 0 27.30 6.80"><rect x="0.00" y="0.00" width="3.46" height="3.45" fill="#beabbd"/><rect x="3.41" y="0.00" width="3.46" height="3.45" fill="#cbb8b6"/><rect x="6.82" y="0.00" width="3.46" height="3.45" fill="#a490cc"/><rect x="10.24" y="0.00" width="3.46" height="3.45" fill="#bfacbc"/><rect x="13.65" y="0.00" width="3.46" height="3.45" fill="#cebbb4"/><rect x="17.06" y="0.00" width="3.46" height="3.45" fill="#efdda1"/><rect x="20.47" y="0.00" width="3.46" height="3.45" fill="#f1dfa0"/><rect x="23.89" y="0.00" width="3.46" height="3.45" fill="#cbb8b6"/><rect x="0.00" y="3.40" width="3.46" height="3.45" fill="#e2cfa9"/><rect x="3.41" y="3.40" width="3.46" height="3.45" fill="#d2bfb2"/><rect x="6.82" y="3.40" width="3.46" height="3.45" fill="#bba8bf"/><rect x="10.24" y="3.40" width="3.46" height="3.45" fill="#b7a3c1"/><rect x="13.65" y="3.40" width="3.46" height="3.45" fill="#9d89d0"/><rect x="17.06" y="3.40" width="3.46" height="3.45" fill="#a490cc"/><rect x="20.47" y="3.40" width="3.46" height="3.45" fill="#d2bfb2"/><rect x="23.89" y="3.40" width="3.46" height="3.45" fill="#ead8a4"/></svg>
<svg class="b" style="left:1472.4px;top:116px;width:62px;height:13.6px;filter:blur(0.55px);" viewBox="0 0 31.00 6.80"><rect x="0.00" y="0.00" width="3.49" height="3.45" fill="#c0acbc"/><rect x="3.44" y="0.00" width="3.49" height="3.45" fill="#ebd8a3"/><rect x="6.89" y="0.00" width="3.49" height="3.45" fill="#cebbb4"/><rect x="10.33" y="0.00" width="3.49" height="3.45" fill="#d0bdb3"/><rect x="13.78" y="0.00" width="3.49" height="3.45" fill="#bba8bf"/><rect x="17.22" y="0.00" width="3.49" height="3.45" fill="#c2afbb"/><rect x="20.67" y="0.00" width="3.49" height="3.45" fill="#cdbab4"/><rect x="24.11" y="0.00" width="3.49" height="3.45" fill="#f4e29e"/><rect x="27.56" y="0.00" width="3.49" height="3.45" fill="#e9d7a4"/><rect x="0.00" y="3.40" width="3.49" height="3.45" fill="#b8a4c1"/><rect x="3.44" y="3.40" width="3.49" height="3.45" fill="#c1aebb"/><rect x="6.89" y="3.40" width="3.49" height="3.45" fill="#c2afbb"/><rect x="10.33" y="3.40" width="3.49" height="3.45" fill="#bda9be"/><rect x="13.78" y="3.40" width="3.49" height="3.45" fill="#e8d6a5"/><rect x="17.22" y="3.40" width="3.49" height="3.45" fill="#ad99c7"/><rect x="20.67" y="3.40" width="3.49" height="3.45" fill="#b6a2c2"/><rect x="24.11" y="3.40" width="3.49" height="3.45" fill="#c3b0ba"/><rect x="27.56" y="3.40" width="3.49" height="3.45" fill="#cbb8b6"/></svg>
<svg class="b" style="left:582.6px;top:138.2px;width:6.8px;height:13.6px;filter:blur(0.55px);" viewBox="0 0 3.40 6.80"><rect x="0.00" y="0.00" width="3.45" height="3.45" fill="#dbe3fd"/><rect x="0.00" y="3.40" width="3.45" height="3.45" fill="#babff9"/></svg>
<svg class="b" style="left:602.6px;top:138.2px;width:133.4px;height:13.6px;filter:blur(0.55px);" viewBox="0 0 66.70 6.80"><rect x="0.00" y="0.00" width="3.38" height="3.45" fill="#acb1f8"/><rect x="3.33" y="0.00" width="3.38" height="3.45" fill="#c5cbfa"/><rect x="6.67" y="0.00" width="3.38" height="3.45" fill="#9da1f7"/><rect x="10.00" y="0.00" width="3.38" height="3.45" fill="#b7bcf9"/><rect x="13.34" y="0.00" width="3.38" height="3.45" fill="#ced4fb"/><rect x="16.67" y="0.00" width="3.38" height="3.45" fill="#b3b8f9"/><rect x="20.01" y="0.00" width="3.38" height="3.45" fill="#b1b6f9"/><rect x="23.34" y="0.00" width="3.38" height="3.45" fill="#989cf6"/><rect x="26.68" y="0.00" width="3.38" height="3.45" fill="#adb1f8"/><rect x="30.01" y="0.00" width="3.38" height="3.45" fill="#bec4fa"/><rect x="33.35" y="0.00" width="3.38" height="3.45" fill="#9b9ef7"/><rect x="36.68" y="0.00" width="3.38" height="3.45" fill="#d5dcfc"/><rect x="40.02" y="0.00" width="3.38" height="3.45" fill="#d6defc"/><rect x="43.35" y="0.00" width="3.38" height="3.45" fill="#b9bff9"/><rect x="46.69" y="0.00" width="3.38" height="3.45" fill="#cfd6fb"/><rect x="50.02" y="0.00" width="3.38" height="3.45" fill="#b3b8f9"/><rect x="53.36" y="0.00" width="3.38" height="3.45" fill="#dbe2fd"/><rect x="56.69" y="0.00" width="3.38" height="3.45" fill="#8c8ef5"/><rect x="60.03" y="0.00" width="3.38" height="3.45" fill="#b3b8f9"/><rect x="63.36" y="0.00" width="3.38" height="3.45" fill="#c5cbfb"/><rect x="0.00" y="3.40" width="3.38" height="3.45" fill="#8789f5"/><rect x="3.33" y="3.40" width="3.38" height="3.45" fill="#a5a9f8"/><rect x="6.67" y="3.40" width="3.38" height="3.45" fill="#7677f3"/><rect x="10.00" y="3.40" width="3.38" height="3.45" fill="#999cf6"/><rect x="13.34" y="3.40" width="3.38" height="3.45" fill="#9a9df7"/><rect x="16.67" y="3.40" width="3.38" height="3.45" fill="#9093f6"/><rect x="20.01" y="3.40" width="3.38" height="3.45" fill="#a6aaf8"/><rect x="23.34" y="3.40" width="3.38" height="3.45" fill="#6969f2"/><rect x="26.68" y="3.40" width="3.38" height="3.45" fill="#aaaef8"/><rect x="30.01" y="3.40" width="3.38" height="3.45" fill="#9a9df7"/><rect x="33.35" y="3.40" width="3.38" height="3.45" fill="#7576f3"/><rect x="36.68" y="3.40" width="3.38" height="3.45" fill="#b8bef9"/><rect x="40.02" y="3.40" width="3.38" height="3.45" fill="#7a7bf4"/><rect x="43.35" y="3.40" width="3.38" height="3.45" fill="#ced5fb"/><rect x="46.69" y="3.40" width="3.38" height="3.45" fill="#9c9ff7"/><rect x="50.02" y="3.40" width="3.38" height="3.45" fill="#b5baf9"/><rect x="53.36" y="3.40" width="3.38" height="3.45" fill="#9a9ef7"/><rect x="56.69" y="3.40" width="3.38" height="3.45" fill="#9193f6"/><rect x="60.03" y="3.40" width="3.38" height="3.45" fill="#b0b5f9"/><rect x="63.36" y="3.40" width="3.38" height="3.45" fill="#9497f6"/></svg>
<svg class="b" style="left:794px;top:138.2px;width:123.6px;height:13.6px;filter:blur(0.55px);" viewBox="0 0 61.80 6.80"><rect x="0.00" y="0.00" width="3.48" height="3.45" fill="#a6aaf8"/><rect x="3.43" y="0.00" width="3.48" height="3.45" fill="#bdc3fa"/><rect x="6.87" y="0.00" width="3.48" height="3.45" fill="#d2dafc"/><rect x="10.30" y="0.00" width="3.48" height="3.45" fill="#c3c9fa"/><rect x="13.73" y="0.00" width="3.48" height="3.45" fill="#abaff8"/><rect x="17.17" y="0.00" width="3.48" height="3.45" fill="#8385f4"/><rect x="20.60" y="0.00" width="3.48" height="3.45" fill="#7171f3"/><rect x="24.03" y="0.00" width="3.48" height="3.45" fill="#e0e8fd"/><rect x="27.47" y="0.00" width="3.48" height="3.45" fill="#b6bbf9"/><rect x="30.90" y="0.00" width="3.48" height="3.45" fill="#afb4f8"/><rect x="34.33" y="0.00" width="3.48" height="3.45" fill="#b9bef9"/><rect x="37.77" y="0.00" width="3.48" height="3.45" fill="#a6aaf8"/><rect x="41.20" y="0.00" width="3.48" height="3.45" fill="#babff9"/><rect x="44.63" y="0.00" width="3.48" height="3.45" fill="#d5dcfc"/><rect x="48.07" y="0.00" width="3.48" height="3.45" fill="#dae1fc"/><rect x="51.50" y="0.00" width="3.48" height="3.45" fill="#a9aef8"/><rect x="54.93" y="0.00" width="3.48" height="3.45" fill="#adb1f8"/><rect x="58.37" y="0.00" width="3.48" height="3.45" fill="#bdc2fa"/><rect x="0.00" y="3.40" width="3.48" height="3.45" fill="#8d8ff5"/><rect x="3.43" y="3.40" width="3.48" height="3.45" fill="#a6abf8"/><rect x="6.87" y="3.40" width="3.48" height="3.45" fill="#b0b4f9"/><rect x="10.30" y="3.40" width="3.48" height="3.45" fill="#888af5"/><rect x="13.73" y="3.40" width="3.48" height="3.45" fill="#c9d0fb"/><rect x="17.17" y="3.40" width="3.48" height="3.45" fill="#9da0f7"/><rect x="20.60" y="3.40" width="3.48" height="3.45" fill="#8183f4"/><rect x="24.03" y="3.40" width="3.48" height="3.45" fill="#d0d7fc"/><rect x="27.47" y="3.40" width="3.48" height="3.45" fill="#c7cdfb"/><rect x="30.90" y="3.40" width="3.48" height="3.45" fill="#7374f3"/><rect x="34.33" y="3.40" width="3.48" height="3.45" fill="#8587f5"/><rect x="37.77" y="3.40" width="3.48" height="3.45" fill="#9c9ff7"/><rect x="41.20" y="3.40" width="3.48" height="3.45" fill="#c0c6fa"/><rect x="44.63" y="3.40" width="3.48" height="3.45" fill="#9ea2f7"/><rect x="48.07" y="3.40" width="3.48" height="3.45" fill="#b3b8f9"/><rect x="51.50" y="3.40" width="3.48" height="3.45" fill="#bcc2fa"/><rect x="54.93" y="3.40" width="3.48" height="3.45" fill="#6c6df2"/><rect x="58.37" y="3.40" width="3.48" height="3.45" fill="#8d90f5"/></svg>
<svg class="b" style="left:965.8px;top:138.2px;width:73.2px;height:13.6px;filter:blur(0.55px);" viewBox="0 0 36.60 6.80"><rect x="0.00" y="0.00" width="3.38" height="3.45" fill="#c8cefb"/><rect x="3.33" y="0.00" width="3.38" height="3.45" fill="#ccd2fb"/><rect x="6.65" y="0.00" width="3.38" height="3.45" fill="#d4dcfc"/><rect x="9.98" y="0.00" width="3.38" height="3.45" fill="#dee6fd"/><rect x="13.31" y="0.00" width="3.38" height="3.45" fill="#dce4fd"/><rect x="16.64" y="0.00" width="3.38" height="3.45" fill="#bfc5fa"/><rect x="19.96" y="0.00" width="3.38" height="3.45" fill="#bdc3fa"/><rect x="23.29" y="0.00" width="3.38" height="3.45" fill="#bcc2fa"/><rect x="26.62" y="0.00" width="3.38" height="3.45" fill="#9699f6"/><rect x="29.95" y="0.00" width="3.38" height="3.45" fill="#c4cafa"/><rect x="33.27" y="0.00" width="3.38" height="3.45" fill="#b8bdf9"/><rect x="0.00" y="3.40" width="3.38" height="3.45" fill="#8587f5"/><rect x="3.33" y="3.40" width="3.38" height="3.45" fill="#9b9ef7"/><rect x="6.65" y="3.40" width="3.38" height="3.45" fill="#9396f6"/><rect x="9.98" y="3.40" width="3.38" height="3.45" fill="#aaaff8"/><rect x="13.31" y="3.40" width="3.38" height="3.45" fill="#8f91f6"/><rect x="16.64" y="3.40" width="3.38" height="3.45" fill="#989bf6"/><rect x="19.96" y="3.40" width="3.38" height="3.45" fill="#9295f6"/><rect x="23.29" y="3.40" width="3.38" height="3.45" fill="#a0a3f7"/><rect x="26.62" y="3.40" width="3.38" height="3.45" fill="#a8adf8"/><rect x="29.95" y="3.40" width="3.38" height="3.45" fill="#aaaff8"/><rect x="33.27" y="3.40" width="3.38" height="3.45" fill="#999cf6"/></svg>
<svg class="b" style="left:1130px;top:138.2px;width:14px;height:13.6px;filter:blur(0.55px);" viewBox="0 0 7.00 6.80"><rect x="0.00" y="0.00" width="3.55" height="3.45" fill="#c6ccfb"/><rect x="3.50" y="0.00" width="3.55" height="3.45" fill="#dfe7fd"/><rect x="0.00" y="3.40" width="3.55" height="3.45" fill="#b4b9f9"/><rect x="3.50" y="3.40" width="3.55" height="3.45" fill="#9193f6"/></svg>
<svg class="b" style="left:1343px;top:138.2px;width:54.6px;height:13.6px;filter:blur(0.55px);" viewBox="0 0 27.30 6.80"><rect x="0.00" y="0.00" width="3.46" height="3.45" fill="#b6bcf9"/><rect x="3.41" y="0.00" width="3.46" height="3.45" fill="#6969f2"/><rect x="6.82" y="0.00" width="3.46" height="3.45" fill="#a0a4f7"/><rect x="10.24" y="0.00" width="3.46" height="3.45" fill="#8a8cf5"/><rect x="13.65" y="0.00" width="3.46" height="3.45" fill="#9598f6"/><rect x="17.06" y="0.00" width="3.46" height="3.45" fill="#9092f6"/><rect x="20.47" y="0.00" width="3.46" height="3.45" fill="#cdd3fb"/><rect x="23.89" y="0.00" width="3.46" height="3.45" fill="#9ea1f7"/><rect x="0.00" y="3.40" width="3.46" height="3.45" fill="#6969f2"/><rect x="3.41" y="3.40" width="3.46" height="3.45" fill="#afb4f9"/><rect x="6.82" y="3.40" width="3.46" height="3.45" fill="#7a7bf4"/><rect x="10.24" y="3.40" width="3.46" height="3.45" fill="#999cf6"/><rect x="13.65" y="3.40" width="3.46" height="3.45" fill="#8f92f6"/><rect x="17.06" y="3.40" width="3.46" height="3.45" fill="#9699f6"/><rect x="20.47" y="3.40" width="3.46" height="3.45" fill="#a0a3f7"/><rect x="23.89" y="3.40" width="3.46" height="3.45" fill="#c3c9fa"/></svg>
<svg class="b" style="left:1472.4px;top:138.2px;width:62px;height:13.6px;filter:blur(0.55px);" viewBox="0 0 31.00 6.80"><rect x="0.00" y="0.00" width="3.49" height="3.45" fill="#a9adf8"/><rect x="3.44" y="0.00" width="3.49" height="3.45" fill="#8d8ff5"/><rect x="6.89" y="0.00" width="3.49" height="3.45" fill="#9396f6"/><rect x="10.33" y="0.00" width="3.49" height="3.45" fill="#a8adf8"/><rect x="13.78" y="0.00" width="3.49" height="3.45" fill="#cad1fb"/><rect x="17.22" y="0.00" width="3.49" height="3.45" fill="#bec3fa"/><rect x="20.67" y="0.00" width="3.49" height="3.45" fill="#cdd4fb"/><rect x="24.11" y="0.00" width="3.49" height="3.45" fill="#7a7cf4"/><rect x="27.56" y="0.00" width="3.49" height="3.45" fill="#9fa3f7"/><rect x="0.00" y="3.40" width="3.49" height="3.45" fill="#9396f6"/><rect x="3.44" y="3.40" width="3.49" height="3.45" fill="#c7cefb"/><rect x="6.89" y="3.40" width="3.49" height="3.45" fill="#cad0fb"/><rect x="10.33" y="3.40" width="3.49" height="3.45" fill="#7d7ff4"/><rect x="13.78" y="3.40" width="3.49" height="3.45" fill="#999cf6"/><rect x="17.22" y="3.40" width="3.49" height="3.45" fill="#9a9df7"/><rect x="20.67" y="3.40" width="3.49" height="3.45" fill="#7d7ff4"/><rect x="24.11" y="3.40" width="3.49" height="3.45" fill="#9295f6"/><rect x="27.56" y="3.40" width="3.49" height="3.45" fill="#6969f2"/></svg>
<svg class="b" style="left:582.6px;top:160.2px;width:6.8px;height:13.6px;filter:blur(0.55px);" viewBox="0 0 3.40 6.80"><rect x="0.00" y="0.00" width="3.45" height="3.45" fill="#ababf8"/><rect x="0.00" y="3.40" width="3.45" height="3.45" fill="#c8c8fb"/></svg>
<svg class="b" style="left:602.6px;top:160.2px;width:139.4px;height:13.6px;filter:blur(0.55px);" viewBox="0 0 69.70 6.80"><rect x="0.00" y="0.00" width="3.53" height="3.45" fill="#a1a1f7"/><rect x="3.48" y="0.00" width="3.53" height="3.45" fill="#ebebfe"/><rect x="6.97" y="0.00" width="3.53" height="3.45" fill="#c3c3fb"/><rect x="10.45" y="0.00" width="3.53" height="3.45" fill="#a4a4f8"/><rect x="13.94" y="0.00" width="3.53" height="3.45" fill="#d7d7fc"/><rect x="17.42" y="0.00" width="3.53" height="3.45" fill="#b7b7f9"/><rect x="20.91" y="0.00" width="3.53" height="3.45" fill="#b5b5f9"/><rect x="24.39" y="0.00" width="3.53" height="3.45" fill="#cfcffc"/><rect x="27.88" y="0.00" width="3.53" height="3.45" fill="#afaff9"/><rect x="31.36" y="0.00" width="3.53" height="3.45" fill="#f2f2ff"/><rect x="34.85" y="0.00" width="3.53" height="3.45" fill="#d2d2fc"/><rect x="38.33" y="0.00" width="3.53" height="3.45" fill="#ddddfd"/><rect x="41.82" y="0.00" width="3.53" height="3.45" fill="#b6b6f9"/><rect x="45.30" y="0.00" width="3.53" height="3.45" fill="#d7d7fc"/><rect x="48.79" y="0.00" width="3.53" height="3.45" fill="#a1a1f7"/><rect x="52.27" y="0.00" width="3.53" height="3.45" fill="#bebefa"/><rect x="55.76" y="0.00" width="3.53" height="3.45" fill="#8484f5"/><rect x="59.24" y="0.00" width="3.53" height="3.45" fill="#f2f2ff"/><rect x="62.73" y="0.00" width="3.53" height="3.45" fill="#a9a9f8"/><rect x="66.21" y="0.00" width="3.53" height="3.45" fill="#b2b2f9"/><rect x="0.00" y="3.40" width="3.53" height="3.45" fill="#9d9df7"/><rect x="3.48" y="3.40" width="3.53" height="3.45" fill="#8181f4"/><rect x="6.97" y="3.40" width="3.53" height="3.45" fill="#a1a1f7"/><rect x="10.45" y="3.40" width="3.53" height="3.45" fill="#dadafd"/><rect x="13.94" y="3.40" width="3.53" height="3.45" fill="#9292f6"/><rect x="17.42" y="3.40" width="3.53" height="3.45" fill="#b5b5f9"/><rect x="20.91" y="3.40" width="3.53" height="3.45" fill="#a1a1f7"/><rect x="24.39" y="3.40" width="3.53" height="3.45" fill="#b4b4f9"/><rect x="27.88" y="3.40" width="3.53" height="3.45" fill="#7c7cf4"/><rect x="31.36" y="3.40" width="3.53" height="3.45" fill="#6c6cf2"/><rect x="34.85" y="3.40" width="3.53" height="3.45" fill="#ebebfe"/><rect x="38.33" y="3.40" width="3.53" height="3.45" fill="#6969f2"/><rect x="41.82" y="3.40" width="3.53" height="3.45" fill="#9090f6"/><rect x="45.30" y="3.40" width="3.53" height="3.45" fill="#c9c9fb"/><rect x="48.79" y="3.40" width="3.53" height="3.45" fill="#d7d7fc"/><rect x="52.27" y="3.40" width="3.53" height="3.45" fill="#9797f6"/><rect x="55.76" y="3.40" width="3.53" height="3.45" fill="#8787f5"/><rect x="59.24" y="3.40" width="3.53" height="3.45" fill="#9999f7"/><rect x="62.73" y="3.40" width="3.53" height="3.45" fill="#7878f3"/><rect x="66.21" y="3.40" width="3.53" height="3.45" fill="#a7a7f8"/></svg>
<svg class="b" style="left:794px;top:160.2px;width:128px;height:13.6px;filter:blur(0.55px);" viewBox="0 0 64.00 6.80"><rect x="0.00" y="0.00" width="3.42" height="3.45" fill="#b0b0f9"/><rect x="3.37" y="0.00" width="3.42" height="3.45" fill="#dfdffd"/><rect x="6.74" y="0.00" width="3.42" height="3.45" fill="#b9b9fa"/><rect x="10.11" y="0.00" width="3.42" height="3.45" fill="#cbcbfb"/><rect x="13.47" y="0.00" width="3.42" height="3.45" fill="#c0c0fa"/><rect x="16.84" y="0.00" width="3.42" height="3.45" fill="#aaaaf8"/><rect x="20.21" y="0.00" width="3.42" height="3.45" fill="#c7c7fb"/><rect x="23.58" y="0.00" width="3.42" height="3.45" fill="#9d9df7"/><rect x="26.95" y="0.00" width="3.42" height="3.45" fill="#ababf8"/><rect x="30.32" y="0.00" width="3.42" height="3.45" fill="#c4c4fb"/><rect x="33.68" y="0.00" width="3.42" height="3.45" fill="#cecefc"/><rect x="37.05" y="0.00" width="3.42" height="3.45" fill="#b3b3f9"/><rect x="40.42" y="0.00" width="3.42" height="3.45" fill="#b9b9fa"/><rect x="43.79" y="0.00" width="3.42" height="3.45" fill="#c1c1fa"/><rect x="47.16" y="0.00" width="3.42" height="3.45" fill="#cfcffc"/><rect x="50.53" y="0.00" width="3.42" height="3.45" fill="#d0d0fc"/><rect x="53.89" y="0.00" width="3.42" height="3.45" fill="#dbdbfd"/><rect x="57.26" y="0.00" width="3.42" height="3.45" fill="#b9b9fa"/><rect x="60.63" y="0.00" width="3.42" height="3.45" fill="#d5d5fc"/><rect x="0.00" y="3.40" width="3.42" height="3.45" fill="#7c7cf4"/><rect x="3.37" y="3.40" width="3.42" height="3.45" fill="#6969f2"/><rect x="6.74" y="3.40" width="3.42" height="3.45" fill="#ececfe"/><rect x="10.11" y="3.40" width="3.42" height="3.45" fill="#dadafd"/><rect x="13.47" y="3.40" width="3.42" height="3.45" fill="#b4b4f9"/><rect x="16.84" y="3.40" width="3.42" height="3.45" fill="#d1d1fc"/><rect x="20.21" y="3.40" width="3.42" height="3.45" fill="#8686f5"/><rect x="23.58" y="3.40" width="3.42" height="3.45" fill="#dfdffd"/><rect x="26.95" y="3.40" width="3.42" height="3.45" fill="#9b9bf7"/><rect x="30.32" y="3.40" width="3.42" height="3.45" fill="#cacafb"/><rect x="33.68" y="3.40" width="3.42" height="3.45" fill="#d3d3fc"/><rect x="37.05" y="3.40" width="3.42" height="3.45" fill="#b8b8fa"/><rect x="40.42" y="3.40" width="3.42" height="3.45" fill="#8686f5"/><rect x="43.79" y="3.40" width="3.42" height="3.45" fill="#e4e4fe"/><rect x="47.16" y="3.40" width="3.42" height="3.45" fill="#a9a9f8"/><rect x="50.53" y="3.40" width="3.42" height="3.45" fill="#8585f5"/><rect x="53.89" y="3.40" width="3.42" height="3.45" fill="#eaeafe"/><rect x="57.26" y="3.40" width="3.42" height="3.45" fill="#6969f2"/><rect x="60.63" y="3.40" width="3.42" height="3.45" fill="#e2e2fd"/></svg>
<svg class="b" style="left:965.8px;top:160.2px;width:150.2px;height:13.6px;filter:blur(0.55px);" viewBox="0 0 75.10 6.80"><rect x="0.00" y="0.00" width="3.46" height="3.45" fill="#ababf8"/><rect x="3.41" y="0.00" width="3.46" height="3.45" fill="#d4d4fc"/><rect x="6.83" y="0.00" width="3.46" height="3.45" fill="#bebefa"/><rect x="10.24" y="0.00" width="3.46" height="3.45" fill="#d6d6fc"/><rect x="13.65" y="0.00" width="3.46" height="3.45" fill="#f2f2ff"/><rect x="17.07" y="0.00" width="3.46" height="3.45" fill="#a5a5f8"/><rect x="20.48" y="0.00" width="3.46" height="3.45" fill="#c0c0fa"/><rect x="23.90" y="0.00" width="3.46" height="3.45" fill="#a8a8f8"/><rect x="27.31" y="0.00" width="3.46" height="3.45" fill="#b6b6f9"/><rect x="30.72" y="0.00" width="3.46" height="3.45" fill="#b6b6f9"/><rect x="34.14" y="0.00" width="3.46" height="3.45" fill="#a1a1f7"/><rect x="37.55" y="0.00" width="3.46" height="3.45" fill="#e2e2fd"/><rect x="40.96" y="0.00" width="3.46" height="3.45" fill="#bebefa"/><rect x="44.38" y="0.00" width="3.46" height="3.45" fill="#d3d3fc"/><rect x="47.79" y="0.00" width="3.46" height="3.45" fill="#d8d8fd"/><rect x="51.20" y="0.00" width="3.46" height="3.45" fill="#d9d9fd"/><rect x="54.62" y="0.00" width="3.46" height="3.45" fill="#eeeeff"/><rect x="58.03" y="0.00" width="3.46" height="3.45" fill="#b2b2f9"/><rect x="61.45" y="0.00" width="3.46" height="3.45" fill="#9d9df7"/><rect x="64.86" y="0.00" width="3.46" height="3.45" fill="#c0c0fa"/><rect x="68.27" y="0.00" width="3.46" height="3.45" fill="#c2c2fa"/><rect x="71.69" y="0.00" width="3.46" height="3.45" fill="#f2f2ff"/><rect x="0.00" y="3.40" width="3.46" height="3.45" fill="#aeaef9"/><rect x="3.41" y="3.40" width="3.46" height="3.45" fill="#9d9df7"/><rect x="6.83" y="3.40" width="3.46" height="3.45" fill="#8585f5"/><rect x="10.24" y="3.40" width="3.46" height="3.45" fill="#d4d4fc"/><rect x="13.65" y="3.40" width="3.46" height="3.45" fill="#a8a8f8"/><rect x="17.07" y="3.40" width="3.46" height="3.45" fill="#a9a9f8"/><rect x="20.48" y="3.40" width="3.46" height="3.45" fill="#aaaaf8"/><rect x="23.90" y="3.40" width="3.46" height="3.45" fill="#a1a1f7"/><rect x="27.31" y="3.40" width="3.46" height="3.45" fill="#9090f6"/><rect x="30.72" y="3.40" width="3.46" height="3.45" fill="#a5a5f8"/><rect x="34.14" y="3.40" width="3.46" height="3.45" fill="#a6a6f8"/><rect x="37.55" y="3.40" width="3.46" height="3.45" fill="#d7d7fc"/><rect x="40.96" y="3.40" width="3.46" height="3.45" fill="#ebebfe"/><rect x="44.38" y="3.40" width="3.46" height="3.45" fill="#9c9cf7"/><rect x="47.79" y="3.40" width="3.46" height="3.45" fill="#d4d4fc"/><rect x="51.20" y="3.40" width="3.46" height="3.45" fill="#e3e3fe"/><rect x="54.62" y="3.40" width="3.46" height="3.45" fill="#9f9ff7"/><rect x="58.03" y="3.40" width="3.46" height="3.45" fill="#b2b2f9"/><rect x="61.45" y="3.40" width="3.46" height="3.45" fill="#9999f7"/><rect x="64.86" y="3.40" width="3.46" height="3.45" fill="#afaff9"/><rect x="68.27" y="3.40" width="3.46" height="3.45" fill="#9a9af7"/><rect x="71.69" y="3.40" width="3.46" height="3.45" fill="#8989f5"/></svg>
<svg class="b" style="left:1130px;top:160.2px;width:14px;height:13.6px;filter:blur(0.55px);" viewBox="0 0 7.00 6.80"><rect x="0.00" y="0.00" width="3.55" height="3.45" fill="#cbcbfb"/><rect x="3.50" y="0.00" width="3.55" height="3.45" fill="#d9d9fd"/><rect x="0.00" y="3.40" width="3.55" height="3.45" fill="#a3a3f8"/><rect x="3.50" y="3.40" width="3.55" height="3.45" fill="#8d8df5"/></svg>
<svg class="b" style="left:1343px;top:160.2px;width:54.6px;height:13.6px;filter:blur(0.55px);" viewBox="0 0 27.30 6.80"><rect x="0.00" y="0.00" width="3.46" height="3.45" fill="#c9c9fb"/><rect x="3.41" y="0.00" width="3.46" height="3.45" fill="#e7e7fe"/><rect x="6.82" y="0.00" width="3.46" height="3.45" fill="#9292f6"/><rect x="10.24" y="0.00" width="3.46" height="3.45" fill="#9595f6"/><rect x="13.65" y="0.00" width="3.46" height="3.45" fill="#9393f6"/><rect x="17.06" y="0.00" width="3.46" height="3.45" fill="#c9c9fb"/><rect x="20.47" y="0.00" width="3.46" height="3.45" fill="#6969f2"/><rect x="23.89" y="0.00" width="3.46" height="3.45" fill="#7474f3"/><rect x="0.00" y="3.40" width="3.46" height="3.45" fill="#8e8ef5"/><rect x="3.41" y="3.40" width="3.46" height="3.45" fill="#ababf8"/><rect x="6.82" y="3.40" width="3.46" height="3.45" fill="#b6b6f9"/><rect x="10.24" y="3.40" width="3.46" height="3.45" fill="#6d6df2"/><rect x="13.65" y="3.40" width="3.46" height="3.45" fill="#9595f6"/><rect x="17.06" y="3.40" width="3.46" height="3.45" fill="#9e9ef7"/><rect x="20.47" y="3.40" width="3.46" height="3.45" fill="#ccccfb"/><rect x="23.89" y="3.40" width="3.46" height="3.45" fill="#d7d7fc"/></svg>
<svg class="b" style="left:1472.4px;top:160.2px;width:62px;height:13.6px;filter:blur(0.55px);" viewBox="0 0 31.00 6.80"><rect x="0.00" y="0.00" width="3.49" height="3.45" fill="#dedefd"/><rect x="3.44" y="0.00" width="3.49" height="3.45" fill="#acacf8"/><rect x="6.89" y="0.00" width="3.49" height="3.45" fill="#c5c5fb"/><rect x="10.33" y="0.00" width="3.49" height="3.45" fill="#c3c3fb"/><rect x="13.78" y="0.00" width="3.49" height="3.45" fill="#9f9ff7"/><rect x="17.22" y="0.00" width="3.49" height="3.45" fill="#d9d9fd"/><rect x="20.67" y="0.00" width="3.49" height="3.45" fill="#9191f6"/><rect x="24.11" y="0.00" width="3.49" height="3.45" fill="#adadf8"/><rect x="27.56" y="0.00" width="3.49" height="3.45" fill="#a7a7f8"/><rect x="0.00" y="3.40" width="3.49" height="3.45" fill="#6d6df2"/><rect x="3.44" y="3.40" width="3.49" height="3.45" fill="#adadf8"/><rect x="6.89" y="3.40" width="3.49" height="3.45" fill="#adadf8"/><rect x="10.33" y="3.40" width="3.49" height="3.45" fill="#9494f6"/><rect x="13.78" y="3.40" width="3.49" height="3.45" fill="#8484f5"/><rect x="17.22" y="3.40" width="3.49" height="3.45" fill="#7171f3"/><rect x="20.67" y="3.40" width="3.49" height="3.45" fill="#bbbbfa"/><rect x="24.11" y="3.40" width="3.49" height="3.45" fill="#6a6af2"/><rect x="27.56" y="3.40" width="3.49" height="3.45" fill="#9292f6"/></svg>
<div class="b " style="left:565.2px;top:306.4px;width:1230.4px;height:16px;background:#f1f1f1;"></div>
<div class="b " style="left:582px;top:308.2px;width:493px;height:12.4px;background:#dcdcdc;"></div>
<svg class="b" style="left:568.8px;top:310.2px;width:6.6px;height:8.4px;" viewBox="0 0 6 7"><path d="M6 0V7L0 3.5Z" fill="#6e6e6e"/></svg>
<svg class="b" style="left:1786.6px;top:310.2px;width:6.6px;height:8.4px;" viewBox="0 0 6 7"><path d="M0 0V7L6 3.5Z" fill="#6e6e6e"/></svg>
<div class="b " style="left:565.2px;top:322.4px;width:1234.8px;height:6.4px;background:#f8f8f8;border-top:1.4px solid #dcdcdc;"></div>
<div class="b " style="left:565.2px;top:328.8px;width:1231.6px;height:25.6px;background:linear-gradient(#e8e8e8,#dedede 30%,#dedede);"></div>
<div class="b " style="left:880px;top:331.2px;width:76.6px;height:23.2px;background:#fff;border-radius:2.4px 2.4px 0 0;"></div>
<div class="t tab" style="top:333.6px;line-height:20px;left:580px;">基本属性</div>
<svg class="b" style="left:651.6px;top:335.6px;width:18.8px;height:16.4px;" viewBox="0 0 19 16"><rect x="0.5" y="0.5" width="8" height="7" fill="#e02828"/><rect x="10.5" y="0.5" width="8" height="7" fill="#2a88e8"/><rect x="0.5" y="8.5" width="8" height="7" fill="#28b828"/><rect x="10.5" y="8.5" width="8" height="7" fill="#f0a020"/><path d="M11 9 L18 15" stroke="#e83020" stroke-width="2"/><path d="M2 2.5 H7 M12 2.5 H17" stroke="#fff" stroke-width="1" opacity=".7"/></svg>
<div class="t tab" style="top:333.6px;line-height:20px;left:674.6px;">零部件</div>
<div class="t tab" style="top:333.6px;line-height:20px;left:735.6px;">附件</div>
<div class="t tab" style="top:333.6px;line-height:20px;left:783px;"><span class="br">[</span>技术文件记录<span class="br">]</span></div>
<div class="t tab" style="top:333.6px;line-height:20px;left:889.2px;"><span class="br">[</span>变更历史<span class="br">]</span></div>
<div class="b " style="left:568px;top:367.2px;width:1227.2px;height:132.8px;border-top:1px solid #e0e0e0;"></div>
<div class="b " style="left:569.2px;top:360px;width:66px;height:16px;background:#fff;"></div>
<div class="t tab" style="top:357.6px;line-height:20px;left:570px;">变更单列表</div>
<div class="b " style="left:567.2px;top:377.2px;width:1228.4px;height:23.4px;background:#e5e5e5;"></div>
<div class="b " style="left:718px;top:380.8px;width:1.2px;height:18.4px;background:#f6f6f6;"></div>
<div class="b " style="left:755px;top:380.8px;width:1.2px;height:18.4px;background:#f6f6f6;"></div>
<div class="b " style="left:924.4px;top:380.8px;width:1.2px;height:18.4px;background:#f6f6f6;"></div>
<div class="b " style="left:1093.2px;top:380.8px;width:1.2px;height:18.4px;background:#f6f6f6;"></div>
<div class="b " style="left:1260.4px;top:380.8px;width:1.2px;height:18.4px;background:#f6f6f6;"></div>
<div class="b " style="left:1435.2px;top:380.8px;width:1.2px;height:18.4px;background:#f6f6f6;"></div>
<div class="b " style="left:1600.8px;top:380.8px;width:1.2px;height:18.4px;background:#f6f6f6;"></div>
<div class="b " style="left:1685px;top:380.8px;width:1.2px;height:18.4px;background:#f6f6f6;"></div>
<div class="t tab" style="top:380.4px;line-height:20px;left:640.4px;transform:translateX(-50%);">代号</div>
<div class="t tab" style="top:380.4px;line-height:20px;left:735.6px;transform:translateX(-50%);">序号</div>
<div class="t tab" style="top:380.4px;line-height:20px;left:841.2px;transform:translateX(-50%);">标题</div>
<div class="t tab" style="top:380.4px;line-height:20px;left:1010.8px;transform:translateX(-50%);">变更原因</div>
<div class="t tab" style="top:380.4px;line-height:20px;left:1178.4px;transform:translateX(-50%);">变更摘要</div>
<div class="t tab" style="top:380.4px;line-height:20px;left:1346.8px;transform:translateX(-50%);">选择文件</div>
<div class="t tab" style="top:380.4px;line-height:20px;left:1516px;transform:translateX(-50%);">变更通知人</div>
<div class="t tab" style="top:380.4px;line-height:20px;left:1642.8px;transform:translateX(-50%);">变更状态</div>
<div class="t tab" style="top:380.4px;line-height:20px;left:1748.8px;transform:translateX(-50%);">文件类型</div>
<svg class="b" style="left:571.8px;top:409.2px;width:7.4px;height:7.2px;" viewBox="0 0 9 7"><path d="M0 0H9L4.5 7Z" fill="#555"/></svg>
<svg class="b" style="left:586.8px;top:403.6px;width:14px;height:16px;" viewBox="0 0 14 16"><path d="M1.5 1 H9 L12 4 V15 H1.5Z" fill="#fdfdf6" stroke="#8a9a8a" stroke-width="1"/><path d="M3.5 5 H9 M3.5 7.5 H9.5 M3.5 10 H7" stroke="#b8c0b8" stroke-width="1"/><path d="M7 10 H14 V16 H7Z" fill="#3aa83a"/><path d="M9 13 L10.5 14.5 L13 11.5" fill="none" stroke="#fff" stroke-width="1.1"/></svg>
<div class="t serif blue" style="top:401.4px;line-height:20px;font-size:14.8px;left:606.6px;transform:scaleX(0.775);transform-origin:0 50%;-webkit-text-stroke:0.1px;">SJBG0004337</div>
<div class="t blue" style="top:401.6px;line-height:20px;font-size:11.8px;left:737.6px;transform:translateX(-50%);">1</div>
<div class="t blue tab" style="top:401.6px;line-height:20px;left:1601.6px;">变更中</div>
<div class="b " style="left:567.2px;top:422.8px;width:1228.4px;height:21.6px;background:#fdeb9e;"></div>
<div class="b " style="left:601px;top:423px;width:94.2px;height:20.2px;border:2px solid #45453a;background:#fbf5d0;"></div>
<svg class="b" style="left:606px;top:425.6px;width:16px;height:16px;" viewBox="0 0 16 16"><path d="M2 1 H10 L13 4 V15 H2Z" fill="#eef2fa" stroke="#8a9ab8" stroke-width="1"/><circle cx="8" cy="9.5" r="4.4" fill="#d8e6fa" stroke="#2a66c8" stroke-width="1.6"/><circle cx="8" cy="9.5" r="1.6" fill="#2a66c8"/></svg>
<div class="t serif gray" style="top:423.2px;line-height:20px;font-size:14.8px;left:624.4px;transform:scaleX(0.86);transform-origin:0 50%;-webkit-text-stroke:0.1px;">D-MRE1300</div>
<div class="t gray" style="top:423.6px;line-height:20px;font-size:11.8px;left:737.6px;transform:translateX(-50%);">2</div>
<div class="t gray tab" style="top:423.6px;line-height:20px;left:759px;">D-MRE1300附件交付图</div>
<div class="t gray tab" style="top:423.6px;line-height:20px;left:1265.2px;">D-MRE1300.xls</div>
<div class="b " style="left:568.4px;top:510px;width:1227.2px;height:16px;background:#f1f1f1;"></div>
<div class="b " style="left:586.4px;top:511.8px;width:496.6px;height:12.4px;background:#dcdcdc;"></div>
<svg class="b" style="left:574px;top:513.8px;width:6.6px;height:8.4px;" viewBox="0 0 6 7"><path d="M6 0V7L0 3.5Z" fill="#6e6e6e"/></svg>
<svg class="b" style="left:1781.8px;top:513.8px;width:6.6px;height:8.4px;" viewBox="0 0 6 7"><path d="M0 0V7L6 3.5Z" fill="#6e6e6e"/></svg>
<div class="b " style="left:568px;top:545.6px;width:1227.2px;height:374.4px;border-top:1px solid #e0e0e0;"></div>
<div class="b " style="left:569.2px;top:538px;width:52.8px;height:16px;background:#fff;"></div>
<div class="t tab" style="top:536.4px;line-height:20px;left:570px;">差异比较</div>
<div class="b " style="left:567.2px;top:558px;width:1226px;height:21.2px;background:#e6e6e6;"></div>
<div class="b " style="left:609.6px;top:559.6px;width:1.2px;height:18px;background:#f6f6f6;"></div>
<div class="b " style="left:762.4px;top:559.6px;width:1.2px;height:18px;background:#f6f6f6;"></div>
<div class="b " style="left:1137.4px;top:559.6px;width:1.2px;height:18px;background:#f6f6f6;"></div>
<div class="t tab" style="top:559px;line-height:20px;left:588px;transform:translateX(-50%);">序号</div>
<div class="t tab" style="top:559px;line-height:20px;left:687.4px;transform:translateX(-50%);">名称</div>
<div class="t tab" style="top:559px;line-height:20px;left:952px;transform:translateX(-50%);">变更后</div>
<div class="t tab" style="top:559px;line-height:20px;left:1465px;transform:translateX(-50%);">变更前</div>
<div class="t cell" style="top:579.8px;line-height:20px;left:588px;transform:translateX(-50%);">1</div>
<div class="t cell" style="top:579.8px;line-height:20px;left:687.4px;transform:translateX(-50%);">文件编号</div>
<div class="t cell" style="top:579.8px;line-height:20px;left:951px;transform:translateX(-50%);">MG-D-MRE1300-2101-1</div>
<div class="t cell" style="top:579.8px;line-height:20px;left:1465px;transform:translateX(-50%);">D-MRE1300</div>
<div class="b " style="left:567.2px;top:600.86px;width:1226px;height:21.6px;background:#e8f1fd;"></div>
<div class="t cell" style="top:601.46px;line-height:20px;left:588px;transform:translateX(-50%);">2</div>
<div class="t cell" style="top:601.46px;line-height:20px;left:687.4px;transform:translateX(-50%);">版本</div>
<div class="t cell" style="top:601.46px;line-height:20px;left:951px;transform:translateX(-50%);">0.1</div>
<div class="t cell" style="top:601.46px;line-height:20px;left:1465px;transform:translateX(-50%);">0</div>
<div class="t cell" style="top:623.12px;line-height:20px;left:588px;transform:translateX(-50%);">3</div>
<div class="t cell" style="top:623.12px;line-height:20px;left:687.4px;transform:translateX(-50%);">一级分类</div>
<div class="t cell" style="top:623.12px;line-height:20px;left:951px;transform:translateX(-50%);">环件图纸</div>
<div class="t cell" style="top:623.12px;line-height:20px;left:1465px;transform:translateX(-50%);">车轮图纸</div>
<div class="b " style="left:567.2px;top:644.18px;width:1226px;height:21.6px;background:#e8f1fd;"></div>
<div class="t cell" style="top:644.78px;line-height:20px;left:588px;transform:translateX(-50%);">4</div>
<div class="t cell" style="top:644.78px;line-height:20px;left:687.4px;transform:translateX(-50%);">二级分类</div>
<div class="t cell" style="top:644.78px;line-height:20px;left:951px;transform:translateX(-50%);">环件交付图</div>
<div class="t cell" style="top:666.44px;line-height:20px;left:588px;transform:translateX(-50%);">5</div>
<div class="t cell" style="top:666.44px;line-height:20px;left:687.4px;transform:translateX(-50%);">发布状态</div>
<div class="t cell" style="top:666.44px;line-height:20px;left:951px;transform:translateX(-50%);">已发布</div>
</div>
</body></html>
